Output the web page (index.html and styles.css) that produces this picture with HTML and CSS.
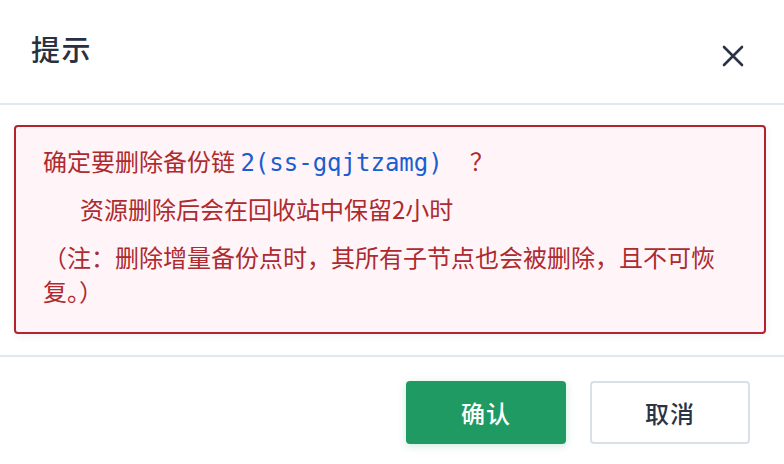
FILE: index.html
```html
<!DOCTYPE html>
<html lang="zh-CN">
<head>
<meta charset="utf-8">
<link rel="stylesheet" href="styles.css">
</head>
<body>
<div class="dialog">
  <div class="dialog-header">
    <div class="dialog-title">提示</div>
    <button class="close-btn" aria-label="关闭">
      <svg width="22" height="22" viewBox="0 0 22 22"><path d="M2 2 L20 20 M20 2 L2 20" stroke="#2a3446" stroke-width="2.6" stroke-linecap="round" fill="none"/></svg>
    </button>
  </div>
  <div class="dialog-body">
    <div class="alert">
      <p class="alert-line">确定要删除备份链 <span class="res-name">2(ss-gqjtzamg)</span><span class="qmark">？</span></p>
      <p class="alert-line indent">资源删除后会在回收站中保留2小时</p>
      <p class="alert-line">（注：删除增量备份点时，其所有子节点也会被删除，且不可恢复。）</p>
    </div>
  </div>
  <div class="dialog-footer">
    <button class="btn btn-primary">确认</button>
    <button class="btn btn-default">取消</button>
  </div>
</div>
</body>
</html>
```

FILE: styles.css
```css
* { box-sizing: border-box; }
html, body {
  margin: 0;
  padding: 0;
  background: #ffffff;
}
body {
  font-family: "Noto Sans CJK SC", "Noto Sans", sans-serif;
  width: 784px;
  height: 464px;
  overflow: hidden;
}
.dialog {
  display: flex;
  flex-direction: column;
}
.dialog-header {
  height: 103px;
  display: flex;
  align-items: center;
  justify-content: space-between;
  padding: 0 40px 0 31px;
  border-bottom: 2px solid #e1e8ef;
  box-sizing: content-box;
}
.dialog-title {
  font-size: 29px;
  font-weight: 500;
  color: #28313f;
  letter-spacing: 1.5px;
  line-height: 1;
  margin-top: -6px;
}
.close-btn {
  border: 0;
  background: none;
  padding: 0;
  width: 22px;
  height: 22px;
  display: flex;
  margin-top: 8px;
}
.dialog-body {
  padding: 20px 18px 21px 14px;
  border-bottom: 2px solid #e1e8ef;
}
.alert {
  border: 2px solid #b2232c;
  border-radius: 4px;
  background: #fff4f7;
  box-shadow: 0 2px 8px rgba(0, 0, 0, 0.06);
  padding: 17px 27px 22px 27px;
  color: #ad2a2f;
  font-size: 24px;
  height: 209px;
}
.alert-line {
  margin: 0 0 14px 0;
  line-height: 34px;
}
.alert-line:last-child { margin-bottom: 0; }
.indent { padding-left: 37px; }
.res-name {
  font-family: "DejaVu Sans Mono", monospace;
  color: #1a5ed2;
  font-size: 24px;
  line-height: 1;
}
.qmark {
  margin-left: 27px;
}
.dialog-footer {
  display: flex;
  justify-content: flex-end;
  gap: 24px;
  padding: 24px 34px 0 0;
}
.btn {
  width: 160px;
  height: 63px;
  border-radius: 4px;
  font-family: "Noto Sans CJK SC", sans-serif;
  font-size: 24px;
  font-weight: 500;
  cursor: pointer;
  display: flex;
  align-items: center;
  justify-content: center;
  letter-spacing: 1px;
}
.btn-primary {
  background: #1e9a62;
  color: #ffffff;
  border: 0;
  box-shadow: 0 2px 8px rgba(30, 154, 98, 0.22);
}
.btn-default {
  background: #ffffff;
  color: #2a3446;
  border: 2px solid #d8e0ea;
}
```
